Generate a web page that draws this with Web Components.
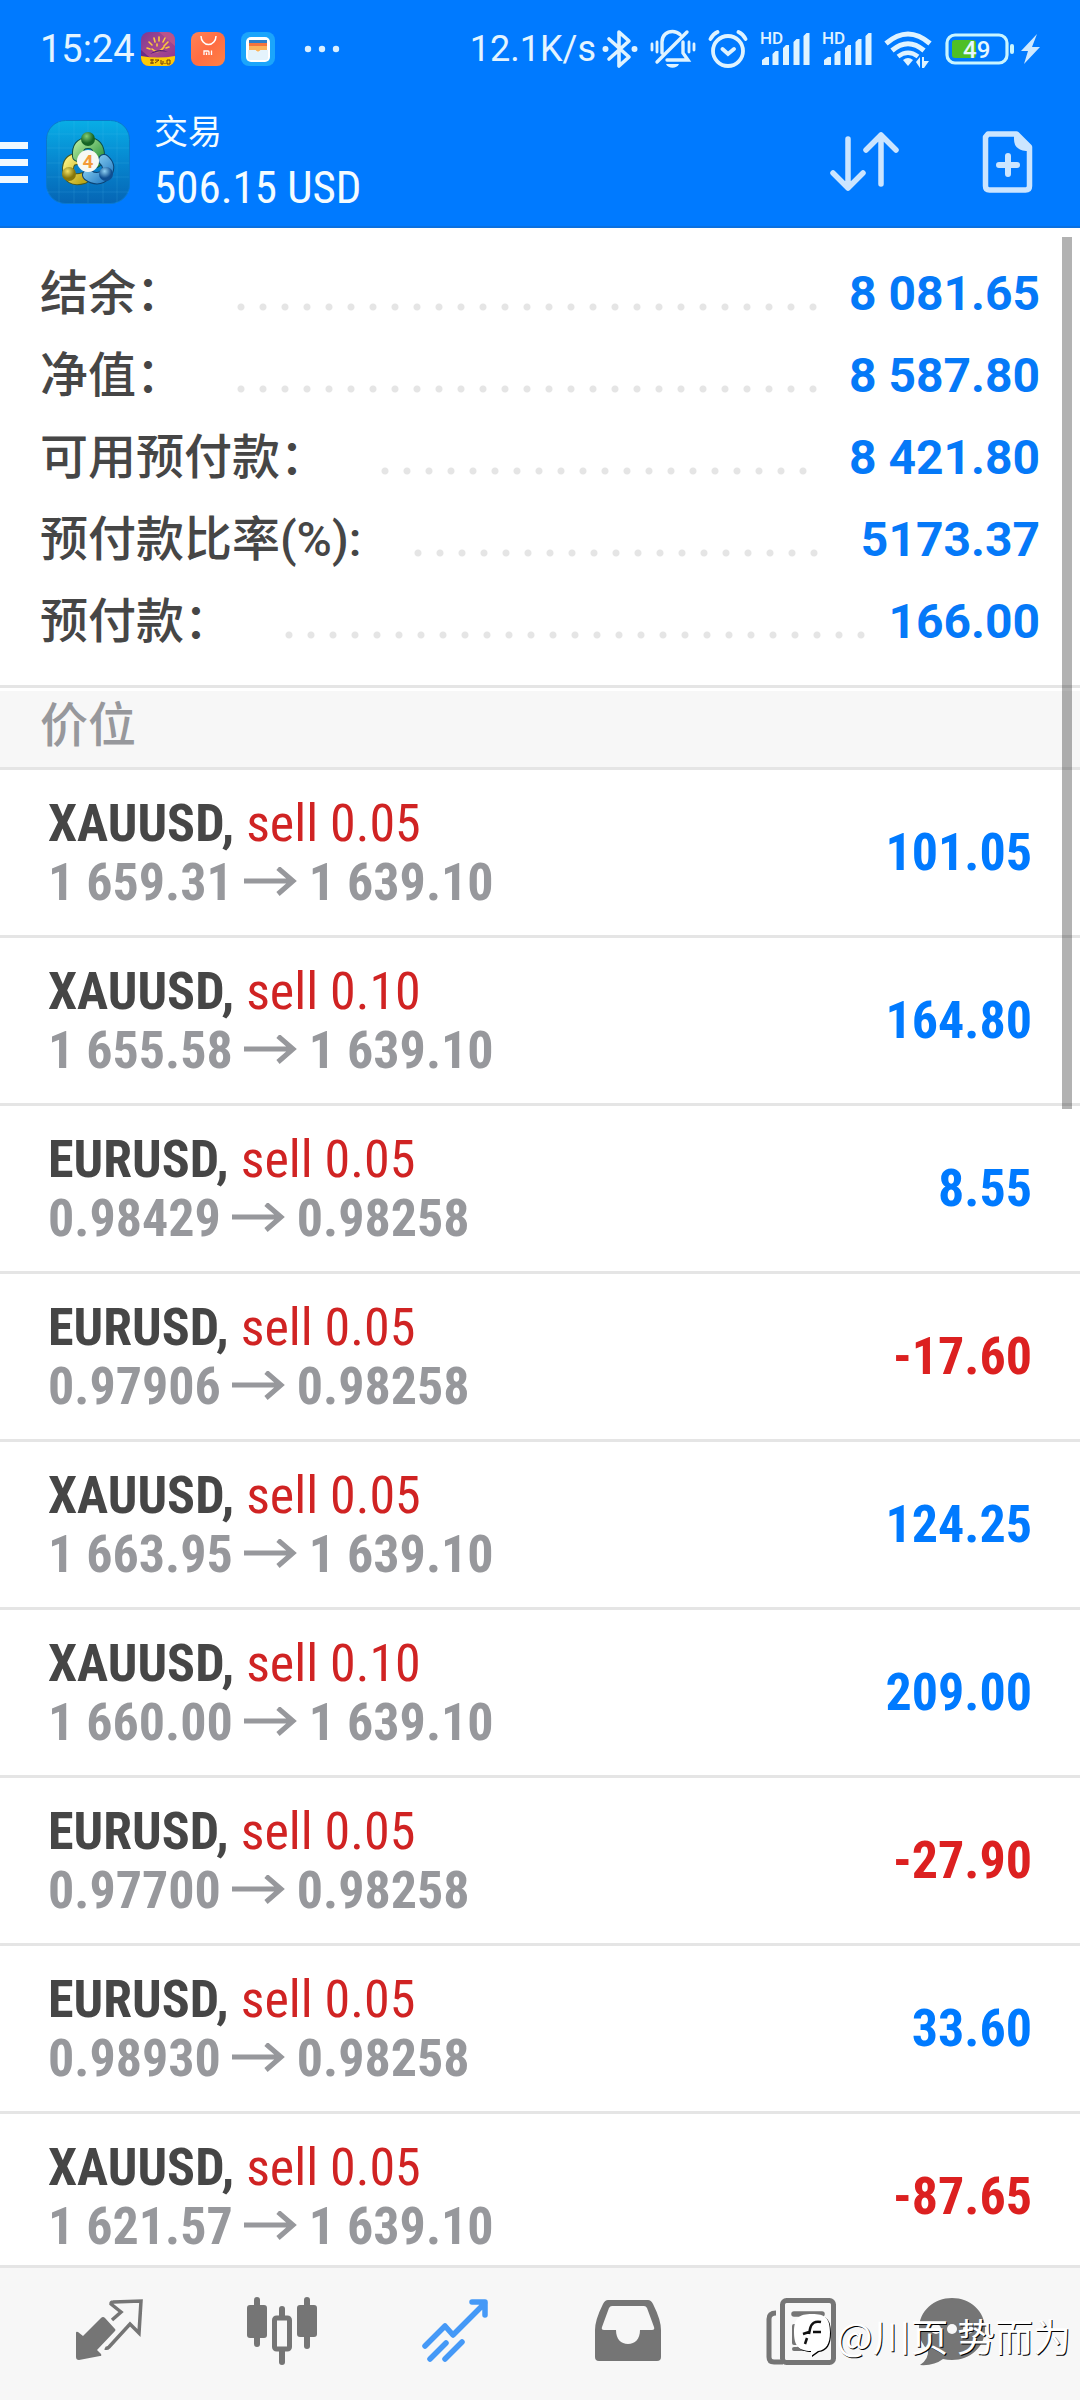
<!DOCTYPE html>
<html lang="zh-CN">
<head>
<meta charset="utf-8">
<meta name="viewport" content="width=device-width, initial-scale=1">
<title>交易</title>
<style>
  html, body { margin: 0; height: 100%; }
  body {
    background: #fff;
    color: #464646;
    font-family: Roboto, "Noto Sans CJK SC", sans-serif;
    --blue: #007aff;
    --value: #0579f8;
    --red: #d02323;
    --grey: #97989c;
    --line: #e5e5e5;
    --panel: #f7f7f7;
    --condensed: "Roboto Condensed", "Noto Sans CJK SC", sans-serif;
  }
</style>
</head>
<body>
<trade-app>
  <status-bar slot="top" time="15:24" speed="12.1K/s" battery="49"></status-bar>
  <app-header slot="top" balance="506.15 USD">交易</app-header>

  <account-summary>
    <summary-row value="8 081.65">结余：</summary-row>
    <summary-row value="8 587.80">净值：</summary-row>
    <summary-row value="8 421.80">可用预付款：</summary-row>
    <summary-row value="5173.37">预付款比率(%):</summary-row>
    <summary-row value="166.00">预付款：</summary-row>
  </account-summary>
  <section-title>价位</section-title>
  <trade-row symbol="XAUUSD" volume="0.05" open="1 659.31" now="1 639.10">101.05</trade-row>
  <trade-row symbol="XAUUSD" volume="0.10" open="1 655.58" now="1 639.10">164.80</trade-row>
  <trade-row symbol="EURUSD" volume="0.05" open="0.98429" now="0.98258">8.55</trade-row>
  <trade-row symbol="EURUSD" volume="0.05" open="0.97906" now="0.98258" loss>-17.60</trade-row>
  <trade-row symbol="XAUUSD" volume="0.05" open="1 663.95" now="1 639.10">124.25</trade-row>
  <trade-row symbol="XAUUSD" volume="0.10" open="1 660.00" now="1 639.10">209.00</trade-row>
  <trade-row symbol="EURUSD" volume="0.05" open="0.97700" now="0.98258" loss>-27.90</trade-row>
  <trade-row symbol="EURUSD" volume="0.05" open="0.98930" now="0.98258">33.60</trade-row>
  <trade-row symbol="XAUUSD" volume="0.05" open="1 621.57" now="1 639.10" loss>-87.65</trade-row>

  <tab-bar slot="bottom"></tab-bar>
  <water-mark slot="bottom">@川页 势而为</water-mark>
</trade-app>

<script>
const define = (name, render) => customElements.define(name, class extends HTMLElement {
  connectedCallback() {
    if (this.shadowRoot) return;
    this.attachShadow({ mode: 'open' }).innerHTML = render(a => this.getAttribute(a), this);
  }
});

define('trade-app', () => `
<style>
  :host { display: flex; flex-direction: column; height: 100vh; position: relative; overflow: hidden; background: #fff; }
  .body { flex: 1; min-height: 0; position: relative; overflow: hidden; }
  .thumb { position: absolute; top: 9px; right: 8px; width: 10px; height: calc(43% - 4px); background: rgba(0,0,0,.3); }
  .bottom { position: relative; }
</style>
<slot name="top"></slot>
<main class="body"><slot></slot><div class="thumb"></div></main>
<div class="bottom"><slot name="bottom"></slot></div>`);

define('status-bar', a => `
<style>
  :host { display: flex; align-items: center; justify-content: space-between; height: 98px; padding: 0 40px;
    background: var(--blue); color: #e4f4ff; font-size: 38px; line-height: 46px; }
  .group { display: flex; align-items: center; gap: 12px; }
  .apps { gap: 16px; }
  .near { gap: 6px; }
  .speed { font-size: 36px; }
  svg { display: block; flex: none; }
</style>
<div class="group near">
  <span>${a('time')}</span>
  <div class="group apps">
    <svg width="34" height="34" viewBox="0 0 34 34">
      <defs>
        <linearGradient id="p" x1="0" y1="0" x2="1" y2="1"><stop offset="0" stop-color="#7c3a93"/><stop offset=".5" stop-color="#a8498f"/><stop offset="1" stop-color="#8b3291"/></linearGradient>
        <clipPath id="c"><rect width="34" height="34" rx="8"/></clipPath>
      </defs>
      <g clip-path="url(#c)">
        <rect width="34" height="34" fill="url(#p)"/>
        <path d="M18 0h16v14z" fill="#b9548c"/><path d="M0 18L14 30H0z" fill="#6b2b86"/>
        <path d="M0 24q17 3 34 0v10H0z" fill="#fccb08"/>
        <g stroke="#fcc93c" stroke-width="1.600" stroke-linecap="round" fill="none">
          <path d="M6 16l3 1M8 10l3 3M13 6l1 4M18 5v4M24 6l-2 4M27 10l-4 4M28 15l-3 1M11 17q6 6 12-2M16 12v2"/>
        </g>
        <path d="M9 22q9-7 18-2q-9-2-18 2z" fill="#4d1d78"/>
        <path d="M9 28h4M9 31h4M11 27v5M14 28h4M14 31l4-3M20 28v4h2v-3M24 32v-1M26 28h3v4h-3z" stroke="#6b3a12" stroke-width="1" fill="none"/>
      </g>
    </svg>
    <svg width="34" height="34" viewBox="0 0 34 34">
      <defs><linearGradient id="m" x1="0" y1="0" x2="1" y2="1"><stop offset="0" stop-color="#ff8355"/><stop offset=".5" stop-color="#ff6d43"/><stop offset="1" stop-color="#ff8245"/></linearGradient></defs>
      <rect width="34" height="34" rx="8" fill="url(#m)"/>
      <path d="M10 4a7 8 0 0 0 15 0" fill="none" stroke="#fff" stroke-width="1.500"/>
      <path d="M13 23v-4h4q1 0 1 1v3M15.500 20.500v2.500M20.500 18.500v4.500" fill="none" stroke="#fff" stroke-width="1.300"/>
    </svg>
    <svg width="34" height="34" viewBox="0 0 34 34">
      <rect width="34" height="34" rx="8" fill="#1ba5fb"/>
      <rect x="5" y="5" width="24" height="25" rx="5" fill="#fff"/>
      <rect x="8" y="8" width="18" height="4" fill="#2d7fc6"/>
      <rect x="8" y="11" width="18" height="4" fill="#f3743c"/>
      <path d="M8 14h18v4h-6l-3 2-3-2H8z" fill="#fbb35a"/>
      <path d="M7 18h7l3 2 3-2h7v8q0 2-2 2H9q-2 0-2-2z" fill="#e4f3fc"/>
    </svg>
    <svg width="54" height="8" viewBox="0 0 54 8" fill="#d9efff"><circle cx="17" cy="4" r="3.200"/><circle cx="31" cy="4" r="3.200"/><circle cx="45" cy="4" r="3.200"/></svg>
  </div>
</div>
<div class="group">
  <div class="group near">
    <span class="speed">${a('speed')}</span>
    <svg width="36" height="40" viewBox="0 0 36 40" fill="none" stroke="#dff3ff" stroke-width="3.600" stroke-linejoin="round" stroke-linecap="round">
      <path d="M7 10l20 18-10 9V3l10 9L7 30"/><circle cx="3.500" cy="20" r="2" fill="#dff3ff" stroke-width="2"/><circle cx="32.500" cy="20" r="2" fill="#dff3ff" stroke-width="2"/>
    </svg>
  </div>
  <svg width="46" height="40" viewBox="0 0 46 40" fill="none" stroke="#dff3ff" stroke-width="3.400" stroke-linecap="round">
    <path d="M12 24V13c0-7 5-10.500 10.500-10.500 3 0 5.500 1 7.500 3M33 13v11l5 7H17M37 3L7 33"/>
    <path d="M16 35h13c-2 5-11 5-13 0z" fill="#dff3ff" stroke="none"/>
    <path d="M2 15v6M7 13v10M39 13v10M44 15v6" stroke-width="2.800"/>
  </svg>
  <svg width="40" height="40" viewBox="0 0 40 40" fill="none" stroke="#dff3ff" stroke-width="3.800" stroke-linecap="round">
    <circle cx="20" cy="22" r="15"/><path d="M14.500 20l5.500 5 6-5M2.500 10Q5 5 9.500 3M37.500 10Q35 5 30.500 3"/>
  </svg>
  ${['', ''].map(() => `<svg width="50" height="40" viewBox="0 0 50 40" fill="#dff3ff">
    <text x="0" y="15" font-family="Roboto" font-weight="500" font-size="17">HD</text>
    <path d="M2 36v-5l4-3h3v8zM12.500 36V25l3-3h3v14zM23 36V19l3-3h3v20zM33.500 36V13l3-3h3v26zM43.500 36V7l3-3h3v32z"/>
  </svg>`).join('')}
  <svg width="49" height="40" viewBox="0 0 49 40" fill="none" stroke="#dff3ff" stroke-width="5">
    <path d="M2 14.500Q24 -4.500 46 14.500M8 21.500Q24 8 40 21.500"/><path d="M14 27.500Q24 20 34 27.500" stroke-width="4.500"/>
    <path d="M19 31q5-4 10 0l-5 6z" fill="#dff3ff" stroke="none"/>
    <path d="M32 33l4-5v11zM38 28h2v4h5l-5 7h-2z" fill="#dff3ff" stroke="none"/>
  </svg>
  <svg width="95" height="40" viewBox="0 0 95 40">
    <rect x="2" y="6" width="60" height="28" rx="8" fill="none" stroke="#c9f5ff" stroke-width="3.200"/>
    <rect x="7" y="11" width="24" height="18" rx="3" fill="#4fbf26"/>
    <rect x="65" y="15" width="4" height="10" rx="2" fill="#c9f5ff"/>
    <text x="18" y="28.500" font-family="Roboto" font-weight="500" font-size="24" fill="#e6f9ff">${a('battery')}</text>
    <path d="M92 5L76 22h7l-4 13 16-17h-8z" fill="#cfe9ff"/>
  </svg>
</div>`);

define('app-header', a => `
<style>
  :host { display: flex; align-items: center; height: 128px; background: var(--blue); color: #f4fcff; border-bottom: 2px solid #0b70df; }
  button { display: block; flex: none; margin: 0; padding: 0; border: 0; background: none; color: inherit; }
  svg { display: block; }
  .logo { margin-left: 18px; flex: none; }
  .titles { flex: 1; padding: 4px 0 0 24px; }
  h1 { margin: 0; font-size: 34px; line-height: 46px; font-weight: 400; }
  p { margin: 0; padding-top: 2px; font-size: 45px; line-height: 62px; font-family: var(--condensed); }
  .tools { display: flex; align-items: center; gap: 82px; padding-right: 46px; }
</style>
<button aria-label="菜单"><svg width="28" height="42" viewBox="0 0 28 42" fill="#f0f9ff"><path d="M0 1h28v7H0zM0 18h28v7H0zM0 35h28v7H0z"/></svg></button>
<svg class="logo" width="84" height="84" viewBox="0 0 84 84">
  <defs>
    <linearGradient id="bg" x1="0" y1="0" x2="0" y2="1"><stop offset="0" stop-color="#08aee6"/><stop offset=".5" stop-color="#0786cf"/><stop offset="1" stop-color="#0565b4"/></linearGradient>
    <linearGradient id="g" x1="0" y1="0" x2="1" y2="1"><stop offset="0" stop-color="#a8e496"/><stop offset="1" stop-color="#2d9440"/></linearGradient>
    <linearGradient id="y" x1="0" y1="0" x2="1" y2="1"><stop offset="0" stop-color="#f8ec78"/><stop offset="1" stop-color="#bfa91a"/></linearGradient>
    <linearGradient id="b" x1="0" y1="0" x2="1" y2="1"><stop offset="0" stop-color="#8fd4f4"/><stop offset="1" stop-color="#2a80c6"/></linearGradient>
    <radialGradient id="hg" cx=".4" cy=".3"><stop offset="0" stop-color="#84cf76"/><stop offset="1" stop-color="#156425"/></radialGradient>
    <radialGradient id="hy" cx=".4" cy=".3"><stop offset="0" stop-color="#f2e264"/><stop offset="1" stop-color="#85760c"/></radialGradient>
    <radialGradient id="hb" cx=".4" cy=".3"><stop offset="0" stop-color="#8fd0f2"/><stop offset="1" stop-color="#0f4f92"/></radialGradient>
  </defs>
  <rect x=".5" y=".5" width="83" height="83" rx="19" fill="url(#bg)" stroke="#0a78cc"/>
  <path d="M13 1v82M28 1v82M42 1v82M57 1v82M71 1v82M1 14h82M1 28h82M1 43h82M1 57h82M1 72h82" stroke="#5cc8f2" stroke-opacity=".15" fill="none"/>
  <g fill="none" stroke-linecap="round">
    <path d="M38 58Q22 63 22 48Q23 38 33 39" stroke="#4a5a20" stroke-width="12"/>
    <path d="M38 58Q22 63 22 48Q23 38 33 39" stroke="url(#y)" stroke-width="10"/>
    <path d="M32 36Q31 23 42 23T53 36L50 42" stroke="#0c4f46" stroke-width="12"/>
    <path d="M32 36Q31 23 42 23T53 36L50 42" stroke="url(#g)" stroke-width="10"/>
    <path d="M58 40Q65 46 60 54Q52 62 42 55" stroke="#0b4374" stroke-width="12"/>
    <path d="M58 40Q65 46 60 54Q52 62 42 55" stroke="url(#b)" stroke-width="10"/>
  </g>
  <circle cx="42" cy="19" r="7" fill="url(#hg)"/>
  <circle cx="23" cy="54" r="7" fill="url(#hy)"/>
  <circle cx="60" cy="54" r="7" fill="url(#hb)"/>
  <circle cx="42" cy="41" r="11" fill="#f7f8f4"/>
  <text x="42" y="48" text-anchor="middle" font-family="Roboto" font-weight="700" font-size="19" fill="#f39a3a">4</text>
</svg>
<div class="titles"><h1><slot></slot></h1><p>${a('balance')}</p></div>
<div class="tools">
  <button aria-label="排序"><svg width="70" height="62" viewBox="0 0 70 62" fill="none" stroke="#cbe5ff" stroke-width="5.500" stroke-linecap="round" stroke-linejoin="round"><path d="M18 8v49M3 42l15 15 15-15M51 53V4M36 19L51 4l15 15"/></svg></button>
  <button aria-label="新订单"><svg width="52" height="64" viewBox="0 0 52 64" fill="none" stroke="#cbe5ff"><path d="M6 4h28.500l13 13V56q0 4-4 4H7.500q-4 0-4-4V7z" stroke-width="5.500" stroke-linejoin="round"/><path d="M32 5h5l11 11v5h-4Q32 20 32 9z" fill="#cbe5ff" stroke="none"/><path d="M17 35h18M26 26v18" stroke-width="6" stroke-linecap="round"/></svg></button>
</div>`);

define('account-summary', () => `
<style>
  :host { display: block; padding: 22px 40px 25px; border-bottom: 3px solid var(--line); }
  dl { margin: 0; }
</style>
<dl><slot></slot></dl>`);

/* The leader is cut to whole 22px tiles, so no dot is ever sliced */
define('summary-row', a => `
<style>
  :host { display: flex; align-items: stretch; height: 82px; line-height: 87px; font-size: 48px; }
  dt { font-family: Roboto, "Noto Sans CJK SC", sans-serif; font-weight: 500; }
  dd { margin: 0; font-weight: 700; color: var(--value); }
  .leader { flex: 1; margin: 0 27px 0 53px; }
  .dots { display: block; height: 82px; width: round(down, 100% + 19px, 22px);
    background: radial-gradient(circle at 4px 57px, #e5e5e5 3px, transparent 4px) 0 0 / 22px 82px repeat-x; }
</style>
<dt><slot></slot></dt><span class="leader"><i class="dots"></i></span><dd>${a('value')}</dd>`);

define('section-title', () => `
<style>
  :host { display: block; margin-top: 3px; padding: 0 40px; background: var(--panel); border-bottom: 3px solid var(--line); }
  h2 { margin: 0; padding: 2px 0 8px; font-size: 48px; line-height: 66px; font-weight: 500; color: var(--grey); }
</style>
<h2><slot></slot></h2>`);

define('trade-row', (a, el) => `
<style>
  :host { display: flex; align-items: center; justify-content: space-between; padding: 0 48px; height: 165px;
    border-bottom: 3px solid var(--line); font: 700 52px/59px var(--condensed); }
  .symbol { color: #464646; }
  .side { color: var(--red); font-weight: 400; }
  .price { display: flex; align-items: center; gap: 11px; color: var(--grey); }
  .profit { color: ${el.hasAttribute('loss') ? '#dc2020' : 'var(--blue)'}; }
  svg { display: block; }
</style>
<div>
  <div><span class="symbol">${a('symbol')},</span> <span class="side">sell ${a('volume')}</span></div>
  <div class="price"><span>${a('open')}</span><svg width="54" height="30" viewBox="0 0 54 30" fill="none" stroke="#97989c" stroke-width="5"><path d="M0 14h49M34 1l15 13-15 13"/></svg><span>${a('now')}</span></div>
</div>
<div class="profit"><slot></slot></div>`);

define('tab-bar', () => `
<style>
  :host { display: block; background: var(--panel); border-top: 3px solid var(--line); }
  nav { display: grid; grid-template-columns: repeat(5, 4fr) 3fr; height: 132px; padding: 0 63px 0 22px; }
  a { display: flex; align-items: center; justify-content: center; padding-bottom: 6px; }
  svg { display: block; }
</style>
<nav>
  <a href="#quotes" aria-label="行情"><svg width="68" height="70" viewBox="0 0 68 70" fill="#757575">
    <path d="M1 37q0-2 2-1l5 4 18-18q2-2 4 0l10 11q1 1 0 2L22 54l4 4q1 2-1 2L4 64q-3 0-3-3z"/>
    <path d="M37 24l9-8-10-8q0-2 2-2l28-1-2 32-9-9-21 23q-2 2-4 1" fill="none" stroke="#757575" stroke-width="3.500"/>
  </svg></a>
  <a href="#charts" aria-label="图表"><svg width="70" height="70" viewBox="0 0 70 70" fill="#757575">
    <rect x="0" y="9" width="20" height="33" rx="3"/><rect x="7" y="1" width="6" height="50" rx="3"/>
    <rect x="50" y="9" width="20" height="32" rx="3"/><rect x="57" y="1" width="6" height="52" rx="3"/>
    <rect x="32" y="10" width="6" height="14" rx="3"/><rect x="32" y="52" width="6" height="17" rx="3"/>
    <rect x="27.500" y="22" width="15" height="31" rx="2" fill="none" stroke="#757575" stroke-width="5"/>
  </svg></a>
  <a href="#trade" aria-label="交易" aria-current="page"><svg width="68" height="70" viewBox="0 0 68 70" fill="none" stroke="#4599f7" stroke-width="5.500" stroke-linecap="round" stroke-linejoin="round">
    <path d="M4 50l20-20 8 9L64 7M51 6h13v13"/><path d="M9 63l16-16M24 63l17-17" stroke-linecap="round"/>
  </svg></a>
  <a href="#history" aria-label="历史"><svg width="68" height="70" viewBox="0 0 68 70" fill="#757575">
    <path fill-rule="evenodd" d="M14 4h40q3 0 5 4 8 16 8 26v27q0 4-4 4H5q-4 0-4-4V34Q1 24 9 8q2-4 5-4zM18 10q-2 0-3 2L8 31q-1 3 2 3h12c0 9 5 14 12 14s12-5 12-14h12q3 0 2-3L53 12q-1-2-3-2z"/>
  </svg></a>
  <a href="#news" aria-label="新闻"><svg width="70" height="70" viewBox="0 0 70 70" fill="none" stroke="#757575" stroke-width="5">
    <rect x="16.500" y="4.500" width="51" height="62" rx="4"/><path d="M10 17q-7 0-7 6v38q0 5 5 5h9"/>
    <path d="M28 18h28" stroke-linecap="round" stroke-width="5.500"/><rect x="26" y="28" width="16" height="21" rx="2" fill="#757575" stroke="none"/><path d="M49 31h8M49 41h8M28 53h28" stroke-linecap="round" stroke-width="4"/>
  </svg></a>
  <a href="#messages" aria-label="消息"><svg width="68" height="70" viewBox="0 0 68 70">
    <path d="M34 2c18 0 33 13 33 31S52 64 34 64q-5 0-9-1Q16 70 2 69q9-6 8-15Q1 46 1 33C1 15 16 2 34 2z" fill="#757575"/>
    <g fill="#f7f7f7"><circle cx="18" cy="33" r="5"/><circle cx="34" cy="33" r="5"/><circle cx="50" cy="33" r="5"/></g>
  </svg></a>
</nav>`);

/* Author mark laid over the tab bar */
define('water-mark', () => `
<style>
  :host { position: absolute; right: 9px; bottom: 38px; display: flex; align-items: center; gap: 5px; color: #fff;
    font: 400 38px/54px "Noto Sans CJK SC", sans-serif; text-shadow: 1px 1px 0 #000; pointer-events: none; }
  svg { display: block; filter: drop-shadow(1px 1px 0 #000); }
</style>
<svg width="38" height="44" viewBox="0 0 38 44"><path d="M18 1c13 0 18 4 18 18 0 12-4 18-12 19l-7 5v-5C4 38 0 32 0 19 0 5 5 1 18 1z" fill="#fff"/><path d="M27 9q-9-2-11 7l-1 5M9 21l6-2M19 19h8M13 25l-2 6" fill="none" stroke="#111" stroke-width="2.500"/></svg>
<span><slot></slot></span>`);
</script>
</body>
</html>
